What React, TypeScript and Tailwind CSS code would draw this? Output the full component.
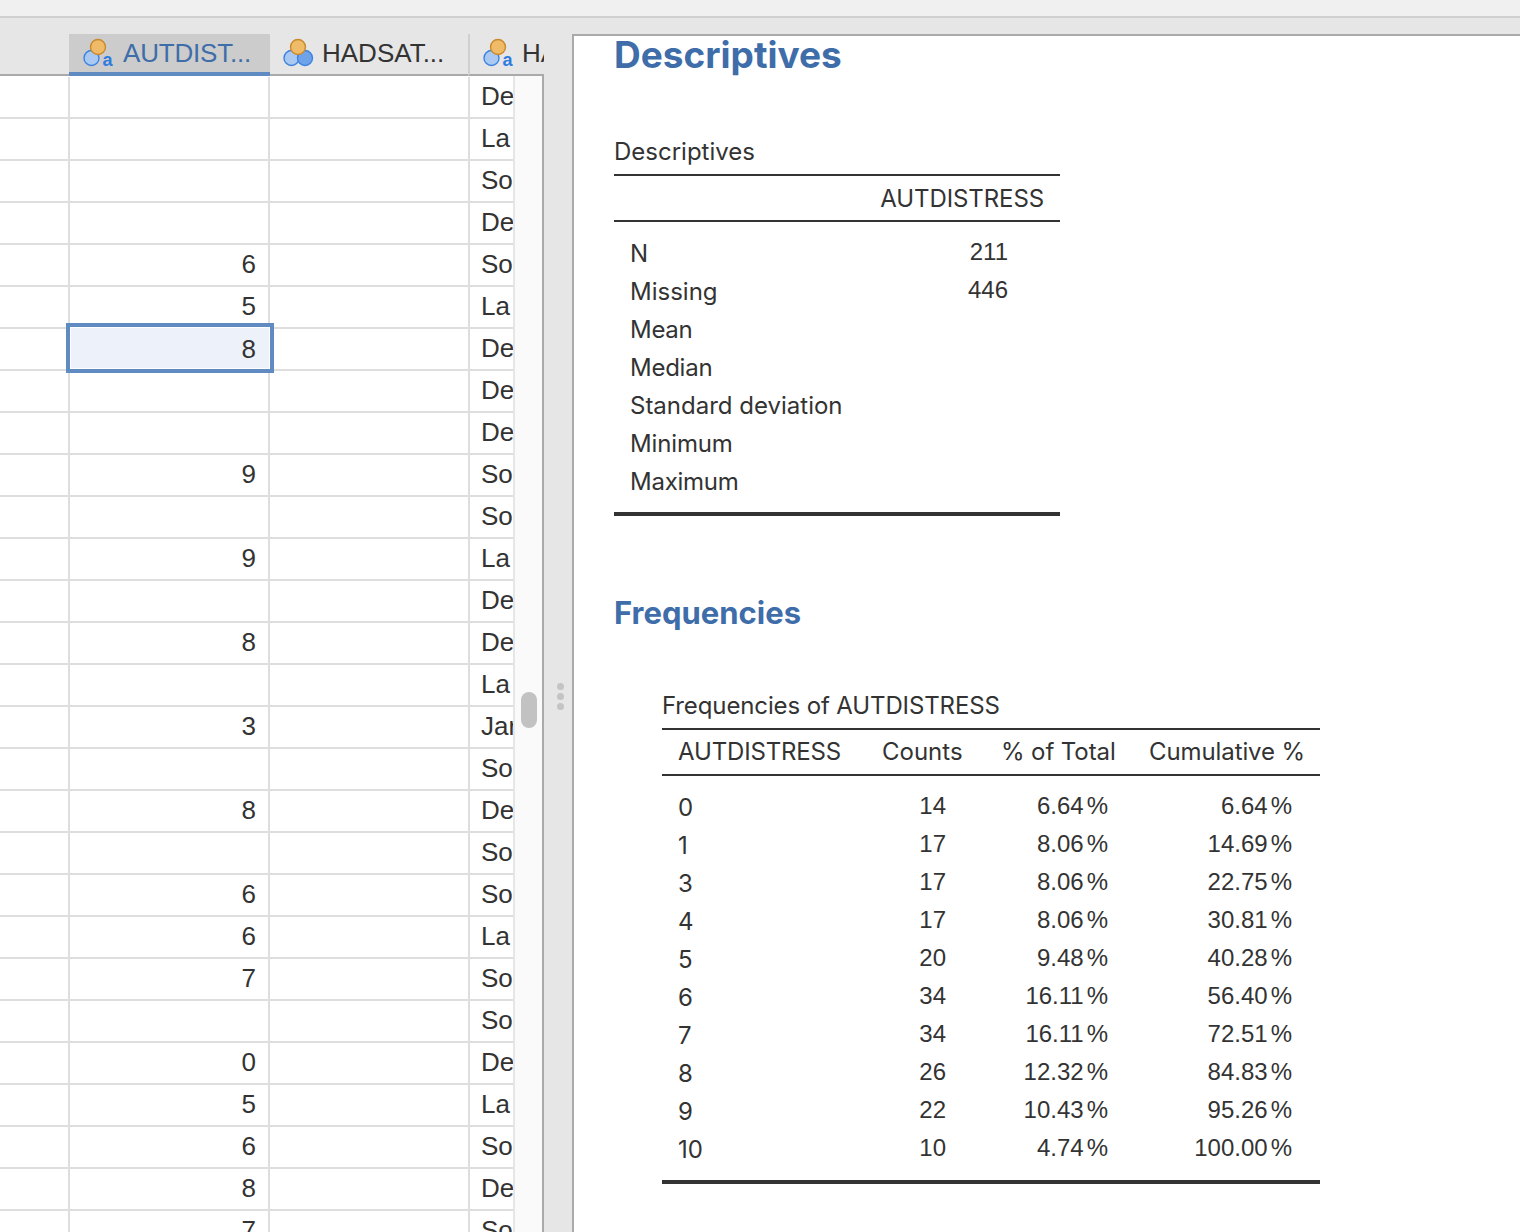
import React from "react";

const colA = ["", "", "", "", "6", "5", "8", "", "", "9", "", "9", "", "8", "", "3", "", "8", "", "6", "6", "7", "", "0", "5", "6", "8", "7"];
const colC = ["De", "La", "So", "De", "So", "La", "De", "De", "De", "So", "So", "La", "De", "De", "La", "Jar", "So", "De", "So", "So", "La", "So", "So", "De", "La", "So", "De", "So"];
const desc = [
  { t: "N", c: "" },
  { t: "Missing", c: "" },
  { t: "Mean", c: "tracking-[-0.3px]" },
  { t: "Median", c: "tracking-[-0.25px]" },
  { t: "Standard deviation", c: "" },
  { t: "Minimum", c: "tracking-[-0.15px]" },
  { t: "Maximum", c: "tracking-[-0.25px]" },
];
const freq = [
  ["0", "14", "6.64", "6.64"],
  ["1", "17", "8.06", "14.69"],
  ["3", "17", "8.06", "22.75"],
  ["4", "17", "8.06", "30.81"],
  ["5", "20", "9.48", "40.28"],
  ["6", "34", "16.11", "56.40"],
  ["7", "34", "16.11", "72.51"],
  ["8", "26", "12.32", "84.83"],
  ["9", "22", "10.43", "95.26"],
  ["10", "10", "4.74", "100.00"],
];

function NominalText() {
  return (
    <svg width="32" height="32" viewBox="0 0 32 32" className="shrink-0">
      <circle cx="9.5" cy="21" r="7.5" fill="#a9c9f2" stroke="#3b82e0" strokeWidth="1.4" />
      <circle cx="16" cy="10" r="7.5" fill="#f0bb68" stroke="#c98a2c" strokeWidth="1.4" />
      <text x="20.5" y="29" fontSize="18" fontWeight="700" fill="#2f7be0" fontFamily="Liberation Sans, sans-serif">a</text>
    </svg>
  );
}

function Nominal() {
  return (
    <svg width="32" height="32" viewBox="0 0 32 32" className="shrink-0">
      <circle cx="9.5" cy="21" r="7.5" fill="#a9c9f2" stroke="#3b82e0" strokeWidth="1.4" />
      <circle cx="23" cy="21" r="7.5" fill="#6ea3ea" stroke="#3b82e0" strokeWidth="1.4" />
      <circle cx="16" cy="10" r="7.5" fill="#f0bb68" stroke="#c98a2c" strokeWidth="1.4" />
    </svg>
  );
}

function Pct({ v }: { v: string }) {
  return (
    <>
      {v}
      <span className="ml-[3px]">%</span>
    </>
  );
}

export default function App() {
  return (
    <div className="w-[1520px] h-[1232px] overflow-hidden bg-[#e6e6e6] font-['Liberation_Sans',sans-serif] text-[#333333]">
      <div className="h-[18px] bg-[#f0f0f0] border-b-2 border-[#d0d0d0]" />
      <div className="flex h-[1214px]">
        <div className="w-[544px] shrink-0 flex flex-col pt-4 overflow-hidden">
          <div className="flex h-[42px] shrink-0 text-[26px] leading-[38px]">
            <div className="w-[69px] shrink-0 border-b-2 border-[#aaaaaa]" />
            <div className="w-[201px] shrink-0 h-[42px] bg-[#cccccc] border-b-4 border-[#5f8ac2] flex items-center pl-[13px] gap-[9px] text-[#3e6da9]">
              <NominalText />
              <span className="tracking-[-0.2px]">AUTDIST...</span>
            </div>
            <div className="w-[198px] shrink-0 border-b-2 border-[#aaaaaa] flex items-center pl-[12px] pb-[2px] gap-2">
              <Nominal />
              <span>HADSAT...</span>
            </div>
            <div className="w-[76px] shrink-0 border-b-2 border-[#aaaaaa] border-l-2 border-l-[#d0d0d0] flex items-center pl-[12px] pb-[2px] gap-2 overflow-hidden">
              <NominalText />
              <span className="w-[23px] overflow-hidden whitespace-nowrap">HADS</span>
            </div>
          </div>
          <div className="flex flex-1 min-h-0 bg-white border-r-2 border-[#aaaaaa] overflow-hidden">
            <div className="w-[513px] shrink-0 overflow-hidden pt-px">
              {colA.map((v, i) => (
                <div key={i} className="flex h-[42px] border-b-2 border-[#dedede] text-[26px] leading-[38px]">
                  <div className="w-[68px] shrink-0" />
                  <div className={`w-[202px] shrink-0 border-x-2 border-[#dedede] text-right pr-[12px] ${i === 6 ? "relative" : ""}`}>
                    {v}
                    {i === 6 && (
                      <div className="absolute -left-[4px] -top-[6px] w-[208px] h-[50px] border-4 border-[#5f8ac2] bg-white p-px">
                        <div className="h-full bg-[#edf1fa] pr-[13px] leading-[42px]">8</div>
                      </div>
                    )}
                  </div>
                  <div className="w-[198px] shrink-0" />
                  <div className="w-[45px] shrink-0 border-l-2 border-[#dedede] pl-[11px] overflow-hidden whitespace-nowrap">
                    {colC[i]}
                  </div>
                </div>
              ))}
            </div>
            <div className="relative flex-1 bg-[#fafafa] border-l-2 border-[#e6e6e6]">
              <div className="absolute left-[6px] top-[616px] w-4 h-9 rounded-lg bg-[#c2c2c2]" />
            </div>
          </div>
        </div>

        <div className="relative w-[28px] shrink-0">
          <div className="absolute left-[13px] top-[665px] flex flex-col gap-[3px]">
            <div className="w-[7px] h-[7px] rounded-full bg-[#c4c4c4]" />
            <div className="w-[7px] h-[7px] rounded-full bg-[#c4c4c4]" />
            <div className="w-[7px] h-[7px] rounded-full bg-[#c4c4c4]" />
          </div>
        </div>

        <div className="flex-1 mt-4 bg-white border-l-2 border-t-2 border-[#aaaaaa] overflow-hidden pl-10 font-['Inter',sans-serif] text-[24px] text-[#333333]">
          <h1 className="text-[37px] leading-[38px] font-bold text-[#3e6da9]">Descriptives</h1>

          <div className="w-[446px] mt-[64px]">
            <div className="h-[38px] leading-[28px] border-b-2 border-[#333333]">Descriptives</div>
            <div className="h-[46px] leading-[46px] border-b-2 border-[#333333] text-right pr-4 tracking-[-0.1px]">AUTDISTRESS</div>
            <div className="flex pt-[12px] pb-[12px] border-b-4 border-[#333333]">
              <div className="flex-1 pl-4">
                {desc.map((d) => (
                  <div key={d.t} className={`h-[38px] leading-[40px] ${d.c}`}>{d.t}</div>
                ))}
              </div>
              <div className="w-[104px] pr-[52px] text-right font-['Liberation_Sans',sans-serif]">
                <div className="h-[38px] leading-[36px]">211</div>
                <div className="h-[38px] leading-[36px]">446</div>
              </div>
            </div>
          </div>

          <h2 className="mt-[79px] text-[31px] leading-[36px] font-bold text-[#3e6da9]">Frequencies</h2>

          <div className="ml-12 mt-[59px] w-[658px]">
            <div className="h-[40px] leading-[32px] border-b-2 border-[#333333] tracking-[-0.12px]">Frequencies of AUTDISTRESS</div>
            <div className="flex h-[46px] leading-[44px] border-b-2 border-[#333333] whitespace-nowrap">
              <div className="w-[220px] pl-4 tracking-[-0.15px]">AUTDISTRESS</div>
              <div className="w-[121px]">Counts</div>
              <div className="w-[146px] -ml-[2px] tracking-[-0.1px]">% of Total</div>
              <div className="ml-[2px] tracking-[-0.1px]">Cumulative %</div>
            </div>
            <div className="pt-3 pb-[12px] border-b-4 border-[#333333]">
              {freq.map((r) => (
                <div key={r[0]} className="flex h-[38px] leading-[36px] font-['Liberation_Sans',sans-serif] whitespace-nowrap">
                  <div className="w-[200px] pl-4 leading-[40px] font-['Inter',sans-serif]">{r[0]}</div>
                  <div className="w-[84px] text-right">{r[1]}</div>
                  <div className="w-[162px] text-right"><Pct v={r[2]} /></div>
                  <div className="w-[184px] text-right"><Pct v={r[3]} /></div>
                </div>
              ))}
            </div>
          </div>
        </div>
      </div>
    </div>
  );
}
